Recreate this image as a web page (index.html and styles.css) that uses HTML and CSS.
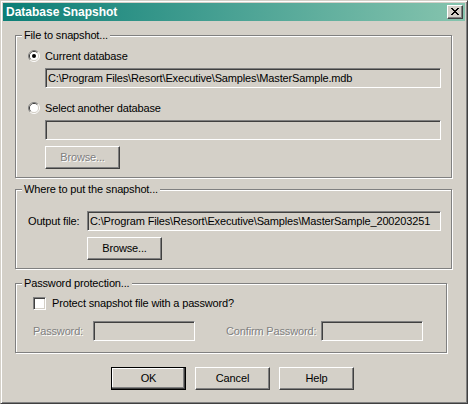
FILE: index.html
```html
<!DOCTYPE html>
<html>
<head>
<meta charset="utf-8">
<title>Database Snapshot</title>
<link rel="stylesheet" href="styles.css">
</head>
<body>
<div class="window">
  <div class="titlebar">
    <span class="title">Database Snapshot</span>
    <div class="close">
      <svg width="8" height="7" viewBox="0 0 8 7"><path d="M0 0h2v1h-2zM6 0h2v1h-2zM1 1h2v1h-2zM5 1h2v1h-2zM2 2h4v1h-4zM3 3h2v1h-2zM2 4h4v1h-4zM1 5h2v1h-2zM5 5h2v1h-2zM0 6h2v1h-2zM6 6h2v1h-2z" fill="#000"/></svg>
    </div>
  </div>

  <div class="group g1">
    <span class="legend">File to snapshot...</span>
    <div class="opt row1">
      <svg class="radio" width="12" height="12" viewBox="0 0 12 12">
        <path d="M2.11 9.89 A5.5 5.5 0 0 1 9.89 2.11" fill="none" stroke="#808080"/>
        <path d="M9.89 2.11 A5.5 5.5 0 0 1 2.11 9.89" fill="none" stroke="#fff"/>
        <path d="M2.82 9.18 A4.5 4.5 0 0 1 9.18 2.82" fill="none" stroke="#404040"/>
        <path d="M9.18 2.82 A4.5 4.5 0 0 1 2.82 9.18" fill="none" stroke="#d4d0c8"/>
        <circle cx="6" cy="6" r="4" fill="#fff"/>
        <circle cx="6" cy="6" r="2" fill="#000"/>
      </svg>
      <span class="opt-text">Current database</span>
    </div>
    <div class="field f1">C:\Program Files\Resort\Executive\Samples\MasterSample.mdb</div>
    <div class="opt row2">
      <svg class="radio" width="12" height="12" viewBox="0 0 12 12">
        <path d="M2.11 9.89 A5.5 5.5 0 0 1 9.89 2.11" fill="none" stroke="#808080"/>
        <path d="M9.89 2.11 A5.5 5.5 0 0 1 2.11 9.89" fill="none" stroke="#fff"/>
        <path d="M2.82 9.18 A4.5 4.5 0 0 1 9.18 2.82" fill="none" stroke="#404040"/>
        <path d="M9.18 2.82 A4.5 4.5 0 0 1 2.82 9.18" fill="none" stroke="#d4d0c8"/>
        <circle cx="6" cy="6" r="4" fill="#fff"/>
      </svg>
      <span class="opt-text">Select another database</span>
    </div>
    <div class="field f2"></div>
    <div class="btn browse1 disabled"><span>Browse...</span></div>
  </div>

  <div class="group g2">
    <span class="legend">Where to put the snapshot...</span>
    <div class="outrow">
      <span class="outlabel">Output file:</span>
      <div class="field f3">C:\Program Files\Resort\Executive\Samples\MasterSample_200203251</div>
    </div>
    <div class="btn browse2"><span>Browse...</span></div>
  </div>

  <div class="group g3">
    <span class="legend">Password protection...</span>
    <div class="checkrow">
      <div class="checkbox"></div>
      <span class="opt-text">Protect snapshot file with a password?</span>
    </div>
    <div class="pwrow">
      <span class="pwlabel disabled-text">Password:</span>
      <div class="field pw"></div>
      <span class="cflabel disabled-text">Confirm Password:</span>
      <div class="field pw"></div>
    </div>
  </div>

  <div class="buttons">
    <div class="btn default"><span>OK</span></div>
    <div class="btn"><span>Cancel</span></div>
    <div class="btn"><span>Help</span></div>
  </div>
</div>
</body>
</html>
```
FILE: styles.css
```css
html, body {
  margin: 0;
  padding: 0;
  background: #d4d0c8;
}
body {
  font-family: "Liberation Sans", Arial, sans-serif;
  font-size: 11px;
  letter-spacing: -0.15px;
  color: #000;
}
.window {
  width: 468px;
  height: 404px;
  box-sizing: border-box;
  border: 1px solid;
  border-color: #d4d0c8 #404040 #404040 #d4d0c8;
  box-shadow: inset 1px 1px 0 #fff, inset -1px -1px 0 #808080;
  padding: 2px;
  background: #d4d0c8;
  display: flex;
  flex-direction: column;
  align-items: flex-start;
}
.titlebar {
  width: 462px;
  height: 18px;
  flex: none;
  background: linear-gradient(to right, #0c7e76 0%, #4aa294 50%, #86c4ae 100%);
  display: flex;
  align-items: flex-start;
  justify-content: space-between;
}
.title {
  color: #fff;
  font-weight: bold;
  font-size: 12px;
  letter-spacing: 0;
  line-height: 18px;
  padding-left: 3px;
}
.close {
  width: 16px;
  height: 14px;
  margin-top: 2px;
  margin-right: 2px;
  box-sizing: border-box;
  border: 1px solid;
  border-color: #fff #404040 #404040 #fff;
  box-shadow: inset -1px -1px 0 #808080;
  background: #d4d0c8;
  display: flex;
  align-items: center;
  justify-content: center;
}
.close svg { display: block; margin-left: -1px; margin-top: -1px; }

.group {
  flex: none;
  box-sizing: border-box;
  border: 1px solid #808080;
  box-shadow: inset 1px 1px 0 #fff, 1px 1px 0 #fff;
  margin-left: 12px;
  display: flex;
  flex-direction: column;
  align-items: flex-start;
}
.g1 { width: 437px; height: 143px; margin-top: 14px; }
.g2 { width: 437px; height: 80px; margin-top: 11px; }
.g3 { width: 432px; height: 70px; margin-top: 14px; }

.legend {
  display: block;
  height: 13px;
  line-height: 13px;
  margin-top: -7px;
  margin-left: 6px;
  padding: 0 2px;
  background: #d4d0c8;
  white-space: nowrap;
}

.opt {
  display: flex;
  align-items: flex-start;
  height: 13px;
  margin-left: 12px;
}
.row1 { margin-top: 8px; }
.row2 { margin-top: 14px; }
.radio { display: block; flex: none; }
.opt-text {
  line-height: 13px;
  white-space: nowrap;
  margin-left: 5px;
}

.field {
  box-sizing: border-box;
  height: 20px;
  border: 1px solid;
  border-color: #808080 #fff #fff #808080;
  box-shadow: inset 1px 1px 0 #404040, inset -1px -1px 0 #d4d0c8;
  background: #d4d0c8;
  padding: 0 2px;
  line-height: 18px;
  white-space: nowrap;
  overflow: hidden;
  flex: none;
}
.f1 { width: 396px; margin-left: 29px; margin-top: 5px; }
.f2 { width: 396px; margin-left: 29px; margin-top: 5px; }
.f3 { width: 354px; }

.btn {
  box-sizing: border-box;
  width: 75px;
  height: 23px;
  border: 1px solid;
  border-color: #fff #404040 #404040 #fff;
  box-shadow: inset -1px -1px 0 #808080;
  background: #d4d0c8;
  display: flex;
  align-items: center;
  justify-content: center;
  flex: none;
}
.btn span { line-height: 13px; }
.btn.disabled span, .disabled-text {
  color: #808080;
  text-shadow: 1px 1px 0 #fff;
}
.btn.default {
  border: 1px solid #000;
  box-shadow: inset -1px -1px 0 #404040, inset -2px -2px 0 #808080, inset 1px 1px 0 #fff;
}
.browse1 { margin-left: 29px; margin-top: 6px; }
.browse2 { margin-left: 71px; margin-top: 6px; }

.outrow {
  display: flex;
  align-items: center;
  margin-top: 15px;
  margin-left: 12px;
}
.outlabel {
  width: 59px;
  flex: none;
  line-height: 13px;
  white-space: nowrap;
}

.checkrow {
  display: flex;
  align-items: flex-start;
  height: 13px;
  margin-top: 7px;
  margin-left: 17px;
}
.checkbox {
  box-sizing: border-box;
  width: 13px;
  height: 13px;
  flex: none;
  border: 1px solid;
  border-color: #808080 #fff #fff #808080;
  box-shadow: inset 1px 1px 0 #404040, inset -1px -1px 0 #d4d0c8;
  background: #fff;
}
.checkrow .opt-text { margin-left: 6px; }

.pwrow {
  display: flex;
  align-items: center;
  margin-top: 11px;
  margin-left: 17px;
}
.pwlabel { width: 60px; flex: none; line-height: 13px; white-space: nowrap; }
.cflabel { width: 95px; margin-left: 31px; flex: none; line-height: 13px; white-space: nowrap; }
.pw { width: 102px; }

.buttons {
  display: flex;
  gap: 9px;
  margin-top: 14px;
  margin-left: 108px;
}
```
